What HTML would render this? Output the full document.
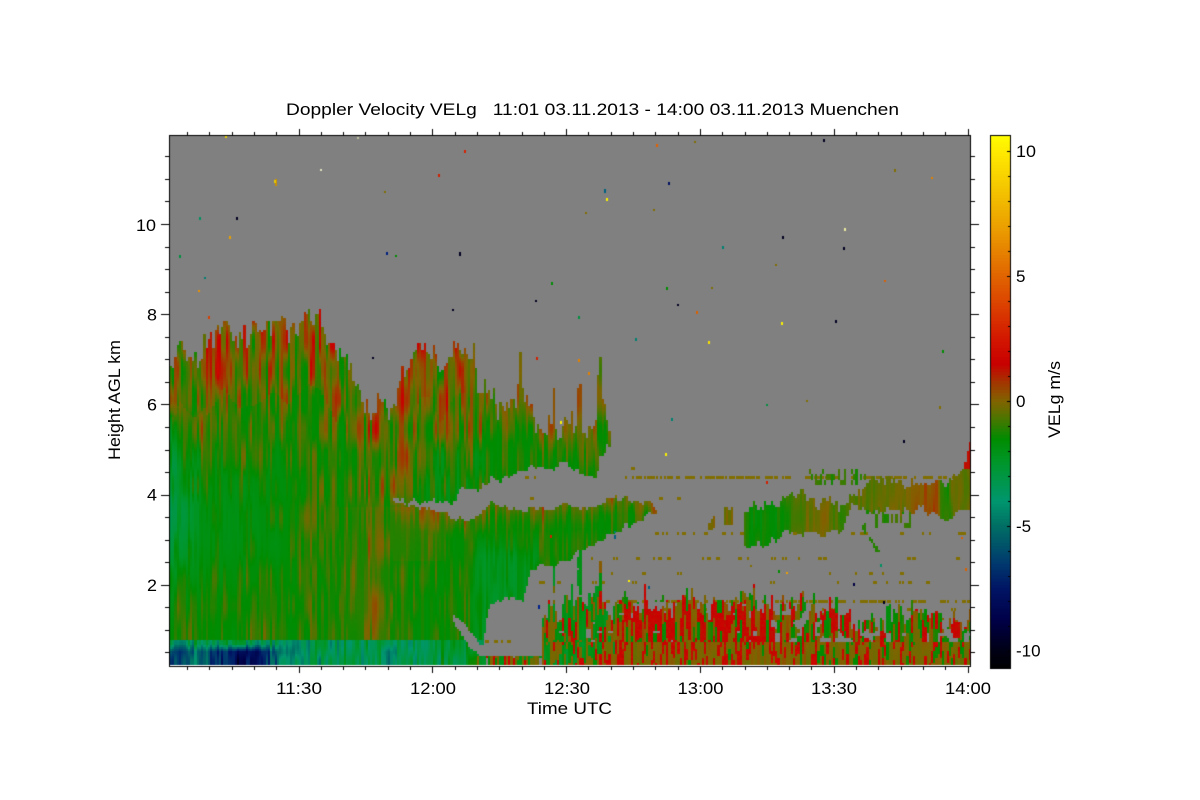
<!DOCTYPE html>
<html>
<head>
<meta charset="utf-8">
<title>Doppler Velocity VELg</title>
<style>
html,body{margin:0;padding:0;background:#fff;width:1200px;height:800px;overflow:hidden}
#c{position:absolute;left:0;top:0}
svg{position:absolute;left:0;top:0}
text{font-family:"Liberation Sans",sans-serif;font-size:17px;fill:#000}
</style>
</head>
<body>
<canvas id="c" width="1200" height="800"></canvas>
<svg width="1200" height="800" viewBox="0 0 1200 800">
<text x="286" y="115" textLength="613" lengthAdjust="spacingAndGlyphs" xml:space="preserve">Doppler Velocity VELg   11:01 03.11.2013 - 14:00 03.11.2013 Muenchen</text>
<text x="136" y="231" textLength="20" lengthAdjust="spacingAndGlyphs">10</text>
<text x="147" y="320.5" textLength="10" lengthAdjust="spacingAndGlyphs">8</text>
<text x="147" y="410.5" textLength="10" lengthAdjust="spacingAndGlyphs">6</text>
<text x="147" y="500.5" textLength="10" lengthAdjust="spacingAndGlyphs">4</text>
<text x="147" y="591" textLength="10" lengthAdjust="spacingAndGlyphs">2</text>
<text x="276" y="694" textLength="46" lengthAdjust="spacingAndGlyphs">11:30</text>
<text x="410" y="694" textLength="46" lengthAdjust="spacingAndGlyphs">12:00</text>
<text x="544" y="694" textLength="46" lengthAdjust="spacingAndGlyphs">12:30</text>
<text x="677.5" y="694" textLength="46" lengthAdjust="spacingAndGlyphs">13:00</text>
<text x="811" y="694" textLength="46" lengthAdjust="spacingAndGlyphs">13:30</text>
<text x="945" y="694" textLength="46" lengthAdjust="spacingAndGlyphs">14:00</text>
<text x="527" y="714" textLength="85" lengthAdjust="spacingAndGlyphs">Time UTC</text>
<text transform="translate(120,460) rotate(-90)" textLength="120" lengthAdjust="spacingAndGlyphs">Height AGL km</text>
<text transform="translate(1060,438) rotate(-90)" textLength="77" lengthAdjust="spacingAndGlyphs">VELg m/s</text>
<text x="1016" y="157" textLength="20" lengthAdjust="spacingAndGlyphs">10</text>
<text x="1016" y="282">5</text>
<text x="1016" y="407">0</text>
<text x="1016" y="532">-5</text>
<text x="1016" y="656.5">-10</text>
</svg>
<script>
(function(){
var ctx=document.getElementById('c').getContext('2d');
ctx.fillStyle='#fff';ctx.fillRect(0,0,1200,800);
var S=[[-10.7,0,0,0],[-10,0,0,20],[-8.8,0,0,70],[-7.5,0,20,100],[-6.4,0,60,110],[-5,0,110,100],[-4,0,150,110],[-2.4,0,150,40],[-1.5,0,140,0],[-0.4,100,110,0],[0,128,100,0],[0.8,165,50,0],[1.5,200,0,0],[2.4,210,20,0],[4,220,70,0],[5,225,100,0],[7,235,160,0],[10,255,235,0],[10.7,255,255,0]];
function col(v){
  if(v<=S[0][0])return 'rgb(0,0,0)';
  for(var k=1;k<S.length;k++){if(v<=S[k][0]){var a=S[k-1],b=S[k],t=(v-a[0])/(b[0]-a[0]);
    return 'rgb('+Math.round(a[1]+(b[1]-a[1])*t)+','+Math.round(a[2]+(b[2]-a[2])*t)+','+Math.round(a[3]+(b[3]-a[3])*t)+')';}}
  return 'rgb(255,255,0)';
}
function h(a,b){var t=(Math.imul(a,374761393)+Math.imul(b,668265263))|0;t=Math.imul(t^(t>>>13),1274126177);t=Math.imul(t^(t>>>15),668265263);return ((t^(t>>>16))>>>0)/4294967296;}
function vn(x,y){var ix=Math.floor(x),iy=Math.floor(y),fx=x-ix,fy=y-iy;fx=fx*fx*(3-2*fx);fy=fy*fy*(3-2*fy);
  var a=h(ix,iy),b=h(ix+1,iy),c=h(ix,iy+1),d=h(ix+1,iy+1);return a+(b-a)*fx+(c-a)*fy+(a-b-c+d)*fx*fy;}
function f(t,x){if(x<=t[0])return t[1];for(var k=2;k<t.length;k+=2){if(x<=t[k])return t[k-1]+(t[k+1]-t[k-1])*(x-t[k-2])/(t[k]-t[k-2]);}return t[t.length-1];}
function cl(a){return a<0?0:a>1?1:a;}
var T1=[170,363,178,340,193,357,207,343,223,317,237,337,257,333,272,320,287,333,307,313,318,317,330,340,337,357,352,370,360,387,370,420,377,400,393,407,400,377,420,347,430,345,440,372,453,345,465,340,473,355,478,395,488,395,500,410,517,395,530,400,537,427,595,428,597,385,605,403,611,432];
var Bu=[392,503,440,503,447,503,457,493,467,485,477,485,507,477,523,467,550,467,573,468,597,473,598,453,611,442];
var Tl=[392,503,440,512,465,520,477,512,490,503,510,508,530,508,560,506,590,505,610,497,625,497,640,500,650,503,657,512];
var Bl=[392,670,478,670,482,645,484,630,487,610,497,600,503,598,522,598,523,590,530,572,540,563,567,565,573,553,593,540,613,532,630,522,640,518,657,512];
var CT=[540,610,555,610,575,600,590,595,610,600,640,600,660,600,680,597,700,605,720,600,745,592,760,600,775,610,790,605,810,603,840,612,850,620,880,625,900,605,930,612,970,620];
var RT=[742,510,745,510,753,504,777,504,787,495,807,493,813,502,817,505,822,495,833,505,847,504,850,493,863,488,870,478,903,480,923,483,943,480,953,475,960,470,967,450,970,445];
var RB=[742,533,745,545,757,547,770,540,777,537,787,532,807,532,817,530,837,530,847,520,850,508,867,507,877,510,890,512,903,510,923,508,937,517,947,518,957,508,970,507];
var Red=[540,.1,590,.15,620,.55,650,.85,760,.85,780,.65,835,.7,850,.45,970,.5];

function cell(x,y,i,j,tp,bp){
  var v=null,n1=vn(i/1.1,j/13),n2=vn(i/7+40,j/35+9),n3=vn(i/22+90,j/70+3),hc0=h(i,8)-.5;
  var top=f(T1,x),d,dt;
  // main cloud
  if(x<=611 && y>=top+tp && (x<392 || y<=f(Bu,x)+bp)){
    d=y-top;dt=cl(d/150);
    v=-0.1-1.2*dt+(n1-.5)*(3.8-1.9*dt)+hc0*(1.1-.5*dt)+(n2-.5)*1.0;
    if(x>205&&x<335&&d<70) v+=0.45;
    if(x>415&&x<470&&d<50) v+=0.25;
    if(x<205&&d<60) v-=.4;
    if(x>480&&x<611){ v=-0.15-1.3*cl(d/38)+(n1-.5)*2.0+hc0*.5; }
    if(v<-1.5) v=-1.5+(v+1.5)*.2;
    v-=1.25*cl((205-x)/32)*cl((y-400)/70)*cl((640-y)/130);
    v-=.35*cl((310-x)/60)*cl((y-400)/70)*cl((610-y)/70);
    v-=.5*cl((x-410)/25)*cl((490-x)/20)*cl((y-430)/25);
  }
  // lower cloud
  if(v===null && x>=392 && x<=657){
    var tl=f(Tl,x);
    if(y>=tl+bp*.6 && y<=f(Bl,x)+bp*.7){
      d=y-tl;dt=cl(d/22);
      v=-0.4-1.0*dt+(n1-.5)*1.8+(n2-.5)*.8+hc0*.5;
      if(x>610) v=-0.1-0.9*cl(d/16)+(n1-.5)*2.4;
      if(v<-1.5) v=-1.5+(v+1.5)*.2;
      v-=.8*cl((x-462)/18)*cl((548-x)/20)*cl((y-530)/25);
    }
  }
  // olive patch
  if(v!==null && x>335 && x<445 && y>505 && y<640){
    v+=(n3-.3)*1.0*cl((y-505)/20)+.15+(x>392&&y<560?.2:0);
  }
  // sliver hole
  if(x>=452&&x<=486){
    var yt=f([452,612,466,626,486,650],x),yb=f([452,620,470,647,486,657],x);
    if(y>yt+bp*.3&&y<yb+bp*.3) v=null;
  }
  // low blue band
  if(y>=640 && x<485){
    var lo;
    var yy=cl((y-642)/9);
    var nb=vn(i/1.1,j/9+5);
    if(x<300){ lo=-3.3-(2.3+3.1*cl(1-Math.abs(x-240)/36))*yy+(nb-.5)*3.2; if(x>272)lo+=(x-272)/28*1.9*yy; }
    else if(x<345){ lo=-4.0+(x-300)/45*.9+(nb-.5)*3.4; }
    else if(x<440){ lo=-3.2+(nb-.5)*2.6; if(x>380&&x<395)lo-=1.3*yy; }
    else { lo=-2.4+(nb-.5)*2.6; }
    if(v!==null||x<450) v=lo;
  }
  // clutter + ground band
  if(x>=475 && y>=(x<540?655:642) && y<663){
    var hh=h(i,Math.floor((j+Math.floor(h(i,5)*6))/5));
    var rr=f([475,.05,545,.08,600,.15,620,.32,770,.34,850,.2,970,.2],x);
    if(x<540&&hh>.9){v=null;}
    else if(hh<rr) v=1.6+(h(i,j)-.5)*.8;
    else if(hh<rr+.5+(x>600?.15:-.1)) v=-0.05+(n1-.5)*.8;
    else if(x<620) v=-2.1+(n1-.5)*1.6;
    else v=-1.5+(n1-.5)*.6;
  } else if(x>=540 && y<663){
    var ct=f(CT,x)+tp*1.1;
    if(y>=ct && y<642){
      var hc=h(i,Math.floor((j+Math.floor(h(i,6)*10))/8));
      var gapN=vn(i/2.5+11,j/4+7);
      var rd=f(Red,x);
      if(x>=775 && y>633 && gapN>.66){ v=null; }
      else if(gapN>.85){ v=null; }
      else if(hc<rd*.62) v=1.5+(h(i,j)-.5)*.6;
      else if(hc<rd*.62+.3) v=0.05+(n1-.5)*.9;
      else v=(x<610?-2.0:-1.5)+(n1-.5)*1.0;
    }
  }
  if(x>=500 && y>=663 && h(i,77)>.12) v=null;
  // right cloud
  if(v===null && x>=742){
    var rt=f(RT,x),rb=f(RB,x);
    if(y>=rt+tp*.45 && y<=rb+bp*.9){
      var b=f([742,-.7,750,-1.3,775,-1.45,790,-.7,815,-.3,850,-.6,880,-.55,905,-.35,923,.25,936,.55,940,-1.1,947,-1.2,952,-.3,970,-.2],x);
      v=b+(n1-.5)*.9+(n2-.5)*.5;
      if(x>962&&y<468) v=1.3;
    }
  }
  if(v===null){
    if(x>=708&&x<=715&&y>=517+tp*.3&&y<=530+bp*.6) v=-.4+(n1-.5)*1.2;
    else if(x>=722&&x<=732&&y>=505+tp*.3&&y<=525+bp*.6) v=-.1+(n1-.5)*1.2;
    else if(x>=805&&x<=865&&y>=468&&y<=483&&h(i,Math.floor(j/3))>.66) v=-.9+(n1-.5)*1.0;
    else if(x>=860&&x<=910&&y>=505&&y<=526&&h(i,Math.floor(j/4)+40)>.68) v=-.9+(n1-.5)*1.0;
    else if(x>=858&&x<=878&&y>=520&&y<=552&&Math.abs(y-(520+(x-858)*1.6))<2.5&&h(i,90)>.3) v=-1.1;
  }
  return v;
}
var rows=[[476,525,640,.12],[476,640,968,.5],[532,655,970,.16],[556.7,580,970,.16],[581,530,970,.1],[600,575,970,.5],[608,660,970,.08],[572,575,970,.04],[629,490,505,.15],[640,485,512,.2],[497,510,700,.02],[467,560,700,.02]];
// data
ctx.fillStyle='#808080';ctx.fillRect(170,136,800,530);
for(var r=0;r<rows.length;r++){
  var R=rows[r],yr=Math.round(R[0]);
  for(var xx=R[1];xx<R[2];xx+=2.225){
    var ii=Math.round(xx/2.225);
    if(h(ii>>1,r+100)<R[3]||h(ii,r+200)<R[3]*.4){ctx.fillStyle='#806e00';ctx.fillRect(Math.round(xx),yr,2,3);}
  }
}
for(var i=0;i<360;i++){
  var x=170+i*2.225,x0=Math.round(x),x1=Math.min(970,Math.round(x+2.225));
  var tp=(vn(i/1.5,7)-.5)*20+(h(i,1)-.5)*16;
  if(x>480&&x<600&&h(i,2)<.22) tp-=h(i,3)*42;
  var bp=(vn(i/2,9)-.5)*12+(h(i,4)-.5)*3;
  for(var j=0;j<236;j++){
    var y=136+j*2.25;
    var v=cell(x,y,i,j,tp,bp);
    if(v!==null){
      var y0=Math.round(y),y1=Math.min(665,Math.round(y+2.25));
      ctx.fillStyle=col(v);ctx.fillRect(x0,y0,x1-x0,y1-y0);
    }
  }
}
// speckles
var sp=[[275,179,7,'#c89000'],[274,180,3,'#e8c800'],[320,169,2,'#e0e0c0'],[236,217,3,'#000020'],[199,217,3,'#009060'],[229,236,3,'#e8a000'],[179,255,3,'#009040'],[204,277,2,'#008070'],[198,290,2,'#e89000'],[208,316,3,'#d84000'],[438,174,3,'#d02000'],[464,150,3,'#d82000'],[656,144,3,'#e06000'],[668,182,3,'#001060'],[604,189,4,'#006080'],[606,198,3,'#f8f000'],[653,209,2,'#806e00'],[585,212,2,'#806e00'],[722,246,3,'#008070'],[782,236,3,'#000020'],[844,228,3,'#e8e8a0'],[843,247,3,'#000020'],[823,139,3,'#000020'],[459,252,4,'#000020'],[386,252,3,'#002080'],[395,255,2,'#008c00'],[384,191,2,'#806e00'],[551,282,3,'#008c00'],[535,300,2,'#000020'],[452,309,2,'#000020'],[666,287,3,'#008c00'],[677,304,2,'#000020'],[711,287,2,'#806e00'],[835,320,3,'#000020'],[781,322,3,'#f8f000'],[708,341,3,'#f8e000'],[696,311,3,'#d86000'],[775,264,2,'#806e00'],[884,280,2,'#d86000'],[578,316,3,'#009040'],[635,338,3,'#008070'],[536,357,3,'#d02000'],[578,359,3,'#e08000'],[588,372,3,'#e08000'],[372,357,2,'#000020'],[942,350,3,'#008c00'],[903,440,3,'#000020'],[665,453,3,'#f8f000'],[939,406,3,'#806e00'],[671,418,3,'#008070'],[806,400,2,'#806e00'],[766,404,2,'#009040'],[931,177,2,'#e08000'],[894,169,3,'#806e00'],[357,137,2,'#c0c0a0'],[694,141,2,'#806e00'],[225,136,2,'#e8d000'],[615,495,3,'#806e00'],[614,535,4,'#006080'],[614,531,2,'#008070'],[550,535,3,'#d02000'],[538,605,4,'#00208a'],[853,583,3,'#000040'],[883,601,3,'#000020'],[628,580,2,'#f8f000'],[648,586,3,'#006080'],[766,481,3,'#d02000'],[786,572,2,'#e8a000'],[778,570,3,'#008c00'],[965,568,3,'#d86000'],[961,537,2,'#d86000'],[880,564,3,'#009060'],[750,565,2,'#806e00'],[560,421,3,'#f8f000']];
for(var s=0;s<sp.length;s++){ctx.fillStyle=sp[s][3];ctx.fillRect(sp[s][0],sp[s][1],2,sp[s][2]);}
// white row under data
ctx.fillStyle='#fff';ctx.fillRect(170,665,800,1);
// axes
ctx.fillStyle='#000';
ctx.fillRect(169,135,802,1);ctx.fillRect(169,666,802,1);ctx.fillRect(169,135,1,532);ctx.fillRect(970,135,1,532);
for(var m=0;m<=35;m++){
  var tx=Math.round(187+m*22.3),maj=((m-5)%6===0)&&m>=5;
  ctx.fillRect(tx,maj?129:132,1,maj?6:3);
  ctx.fillRect(tx,667,1,maj?6:3);
}
for(var q=1;q<=23;q++){
  var ty=Math.round(675-45.1*q*.5),ma=q%4===0;
  ctx.fillRect(ma?161:165,ty,ma?8:4,1);
  ctx.fillRect(971,ty,ma?8:4,1);
}
// colour bar
for(var by=135;by<667;by+=3){ctx.fillStyle=col((401-by-1)/25);ctx.fillRect(990,by,21,3);}
ctx.fillStyle='#000';
ctx.fillRect(990,135,21,1);ctx.fillRect(990,666,21,1);ctx.fillRect(990,135,1,532);ctx.fillRect(1010,135,1,532);
for(var t=-10;t<=10;t++){var yy=401-25*t;ctx.fillRect(t%5===0?1007:1008,yy,3,1);}
})();
</script>
</body>
</html>
